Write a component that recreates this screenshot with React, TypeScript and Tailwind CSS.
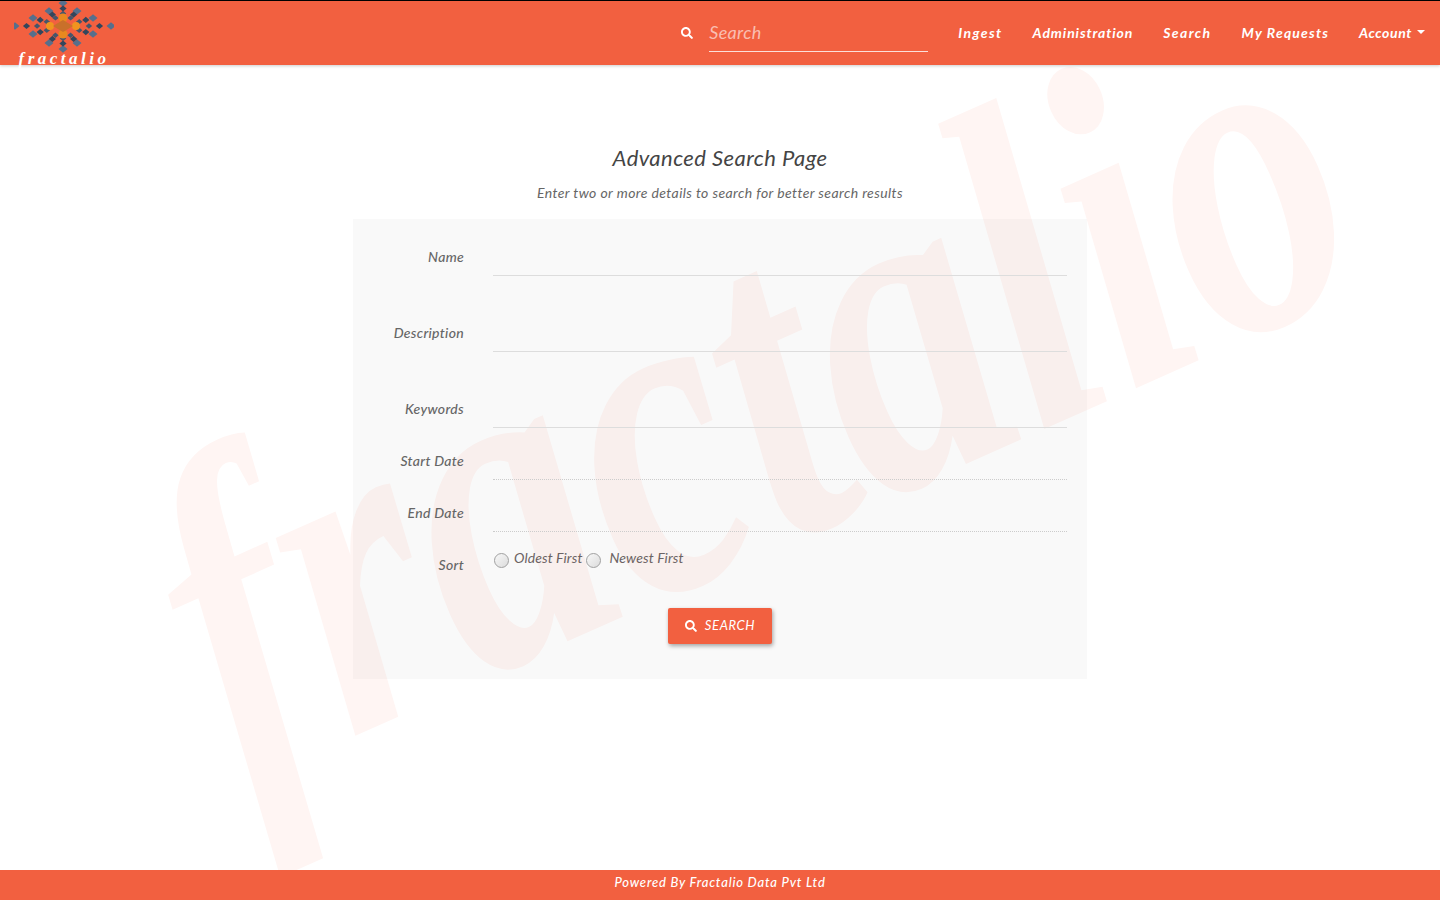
import React from 'react';
import { FaSearch } from 'react-icons/fa';

const navItems = [
  { label: 'Ingest', tracking: 'tracking-[1.4px]' },
  { label: 'Administration', tracking: 'tracking-[0.88px]' },
  { label: 'Search', tracking: 'tracking-[1.4px]' },
  { label: 'My Requests', tracking: 'tracking-[1.15px]' },
];

const fields = [
  { label: 'Name', rowClass: 'h-[76px]', lineClass: 'border-solid border-[#dddddd]' },
  { label: 'Description', rowClass: 'h-[76px]', lineClass: 'border-solid border-[#dddddd]' },
  { label: 'Keywords', rowClass: 'h-[52px]', lineClass: 'border-solid border-[#dddddd]' },
  { label: 'Start Date', rowClass: 'h-[52px]', lineClass: 'border-dotted border-[#cccccc]' },
  { label: 'End Date', rowClass: 'h-[52px]', lineClass: 'border-dotted border-[#cccccc]' },
];

// where each arm of the snowflake ends, measured from its centre
const arms = [
  [-48, 0], [48, 0], [0, -23], [0, 23],
  [-14, -15], [14, -15], [-14, 17], [14, 17],
  [-30, -8], [30, -8], [-30, 8], [30, 8],
];

function Diamond({ x, y, r, fill }: { x: number; y: number; r: number; fill: string }) {
  return <path d={`M${x - r} ${y}L${x} ${y - r * 0.85}L${x + r} ${y}L${x} ${y + r * 0.85}Z`} fill={fill} />;
}

function Logo() {
  return (
    <svg width="100" height="52" viewBox="0 0 100 52" className="block">
      <g transform="translate(49 25)">
        {arms.map(([x, y]) => (
          <g key={`${x}-${y}`}>
            <Diamond x={x} y={y} r={4.5} fill="#566f8c" />
            <Diamond x={x * 0.76} y={y * 0.76} r={3.6} fill="#33465c" />
            <Diamond x={x * 0.54} y={y * 0.54} r={3.2} fill="#44566c" />
          </g>
        ))}
        <circle cx="0" cy="-8" r="4.5" fill="#e8891f" />
        <circle cx="0" cy="8" r="4.5" fill="#e8891f" />
        <circle cx="-13" cy="0" r="4" fill="#f0941f" />
        <circle cx="13" cy="0" r="4" fill="#f0941f" />
        <path d="M-10 0L0 -6L10 0L0 6Z" fill="#c9702a" />
      </g>
    </svg>
  );
}

export default function App() {
  return (
    <div className="relative min-h-screen flex flex-col overflow-hidden bg-white font-['Lato',sans-serif] italic text-[#666666]">
      {/* Watermark */}
      <div aria-hidden="true" className="absolute left-[82px] top-[432px] origin-top-left -rotate-[24deg] scale-y-[1.3] whitespace-nowrap font-['Liberation_Serif',serif] font-bold italic text-[357px] leading-none text-[#fff5f3] select-none">
        fractalio
      </div>

      {/* Header */}
      <header className="relative z-10 h-[65px] border-t border-black bg-[#f26040] shadow-[0_1px_3px_rgba(0,0,0,0.2)] flex items-center text-white">
        <div className="ml-[14px] w-[100px] h-[64px] flex flex-col items-center">
          <Logo />
          <span className="font-['Liberation_Serif',serif] font-bold italic text-[17px] leading-[12px] tracking-[3.5px] whitespace-nowrap">fractalio</span>
        </div>
        <div className="ml-auto flex items-center">
          <FaSearch className="w-[12px] h-[12px]" />
          <div className="ml-[16px] w-[219px] h-[37px] border-b border-white/80 flex items-center text-[18px] tracking-[0.3px] text-white/60">
            Search
          </div>
          <nav className="ml-[15px] pb-[2px] flex items-center text-[14px] font-bold">
            {navItems.map((item) => (
              <a key={item.label} className={`px-[15px] whitespace-nowrap ${item.tracking}`}>{item.label}</a>
            ))}
            <a className="pl-[15px] pr-[15px] flex items-center whitespace-nowrap tracking-[0.6px]">
              Account
              <span className="ml-[5px] w-0 h-0 border-x-4 border-t-4 border-x-transparent border-t-white" />
            </a>
          </nav>
        </div>
      </header>

      {/* Content */}
      <main className="relative flex-1 flex flex-col items-center">
        <h2 className="mt-[80px] text-[22px] leading-[26px] text-[#444444] tracking-[0.45px]">Advanced Search Page</h2>
        <p className="mt-[12px] text-[14px] leading-[20px] tracking-[0.4px]">Enter two or more details to search for better search results</p>
        <section className="mt-[16px] w-[734px] h-[460px] bg-black/[0.025] pt-[20px]">
          {fields.map((f) => (
            <div key={f.label} className={`flex items-start ${f.rowClass}`}>
              <label className="w-[111px] text-right text-[14px] leading-[36px] tracking-[0.3px] font-medium">{f.label}</label>
              <div className={`ml-[29px] w-[574px] h-[37px] border-b ${f.lineClass}`} />
            </div>
          ))}
          <div className="flex items-start h-[28px]">
            <label className="w-[111px] text-right text-[14px] leading-[20px] pt-[8px] tracking-[0.3px] font-medium">Sort</label>
            <div className="ml-[30px] pt-[1px] flex items-start text-[14px] leading-[20px] text-[#6b6363] tracking-[0.1px]">
              <input type="radio" name="sort" className="appearance-none mt-[5px] w-[15px] h-[15px] rounded-full border border-[#a0a0a0] bg-gradient-to-br from-[#f8f8f8] to-[#dcdcdc]" />
              <span className="ml-[5px]">Oldest First</span>
              <input type="radio" name="sort" className="appearance-none ml-[4px] mt-[5px] w-[15px] h-[15px] rounded-full border border-[#a0a0a0] bg-gradient-to-br from-[#f8f8f8] to-[#dcdcdc]" />
              <span className="ml-[8px]">Newest First</span>
            </div>
          </div>
          <div className="mt-[33px] flex justify-center">
            <button className="w-[104px] h-[36px] rounded-[2px] bg-[#f26040] text-white text-[13px] tracking-[0.6px] flex items-center justify-center gap-[8px] shadow-[1px_2px_4px_rgba(0,0,0,0.35)]">
              <FaSearch className="w-[12px] h-[12px]" />
              SEARCH
            </button>
          </div>
        </section>
      </main>

      {/* Footer */}
      <footer className="relative z-10 h-[30px] bg-[#f26040] text-white text-[13px] font-medium leading-[24px] text-center tracking-[0.8px]">
        Powered By Fractalio Data Pvt Ltd
      </footer>
    </div>
  );
}
